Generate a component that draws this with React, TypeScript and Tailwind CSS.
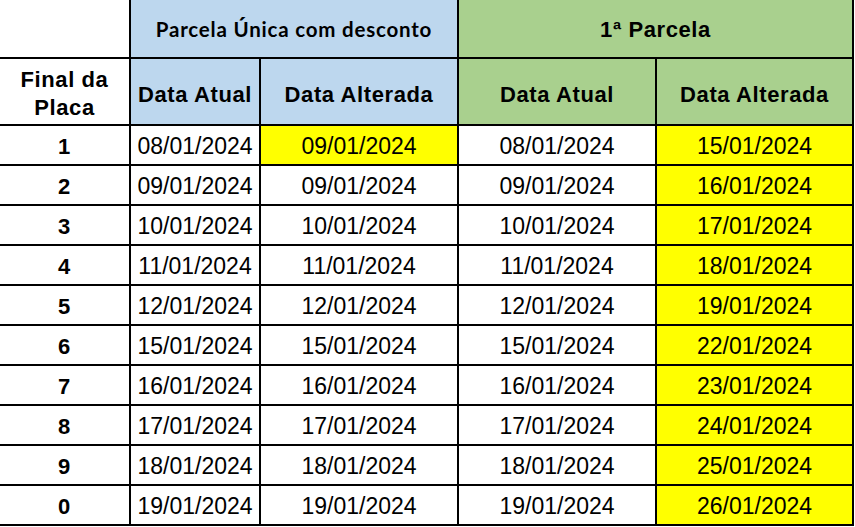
const rows: [string, string, string, string, string][] = [
  ['1', '08/01/2024', '09/01/2024', '08/01/2024', '15/01/2024'],
  ['2', '09/01/2024', '09/01/2024', '09/01/2024', '16/01/2024'],
  ['3', '10/01/2024', '10/01/2024', '10/01/2024', '17/01/2024'],
  ['4', '11/01/2024', '11/01/2024', '11/01/2024', '18/01/2024'],
  ['5', '12/01/2024', '12/01/2024', '12/01/2024', '19/01/2024'],
  ['6', '15/01/2024', '15/01/2024', '15/01/2024', '22/01/2024'],
  ['7', '16/01/2024', '16/01/2024', '16/01/2024', '23/01/2024'],
  ['8', '17/01/2024', '17/01/2024', '17/01/2024', '24/01/2024'],
  ['9', '18/01/2024', '18/01/2024', '18/01/2024', '25/01/2024'],
  ['0', '19/01/2024', '19/01/2024', '19/01/2024', '26/01/2024'],
]

const cell = 'flex items-center justify-center text-black'
const dataText = "pt-[2px] text-[23px] font-['Liberation_Sans',Arial,sans-serif]"
const headText = "text-[22px] tracking-[0.6px] font-bold font-['Liberation_Sans',Arial,sans-serif]"

export default function App() {
  return (
    <div className="min-h-screen bg-white">
      <div className="inline-grid grid-cols-[129px_128px_196px_196px_195px] grid-rows-[57px_65px_repeat(10,38px)] gap-[2px] bg-black pb-[2px] pr-[2px]">
        {/* header row 1 */}
        <div className="bg-white" />
        <div className={`${cell} col-span-2 bg-[#bdd7ee] pt-[2px] font-['Lato','Open_Sans',sans-serif] text-[20.5px] font-bold tracking-[0.8px]`}>
          Parcela Única com desconto
        </div>
        <div className={`${cell} col-span-2 bg-[#a9d08e] pt-[2px] ${headText}`}>
          1ª Parcela
        </div>

        {/* header row 2 */}
        <div className={`${cell} bg-white pt-[4px] text-center leading-[28px] ${headText}`}>
          Final da
          <br />
          Placa
        </div>
        <div className={`${cell} bg-[#bdd7ee] pt-[5px] ${headText}`}>Data Atual</div>
        <div className={`${cell} bg-[#bdd7ee] pt-[5px] ${headText}`}>Data Alterada</div>
        <div className={`${cell} bg-[#a9d08e] pt-[5px] ${headText}`}>Data Atual</div>
        <div className={`${cell} bg-[#a9d08e] pt-[5px] ${headText}`}>Data Alterada</div>

        {rows.map(([final, atual1, alt1, atual2, alt2], i) => (
          <div key={final} className="contents">
            <div className={`${cell} bg-white pt-[2px] ${headText}`}>{final}</div>
            <div className={`${cell} bg-white ${dataText}`}>{atual1}</div>
            <div className={`${cell} ${i === 0 ? 'bg-[#ffff00]' : 'bg-white'} ${dataText}`}>
              {alt1}
            </div>
            <div className={`${cell} bg-white ${dataText}`}>{atual2}</div>
            <div className={`${cell} bg-[#ffff00] ${dataText}`}>{alt2}</div>
          </div>
        ))}
      </div>
    </div>
  )
}
